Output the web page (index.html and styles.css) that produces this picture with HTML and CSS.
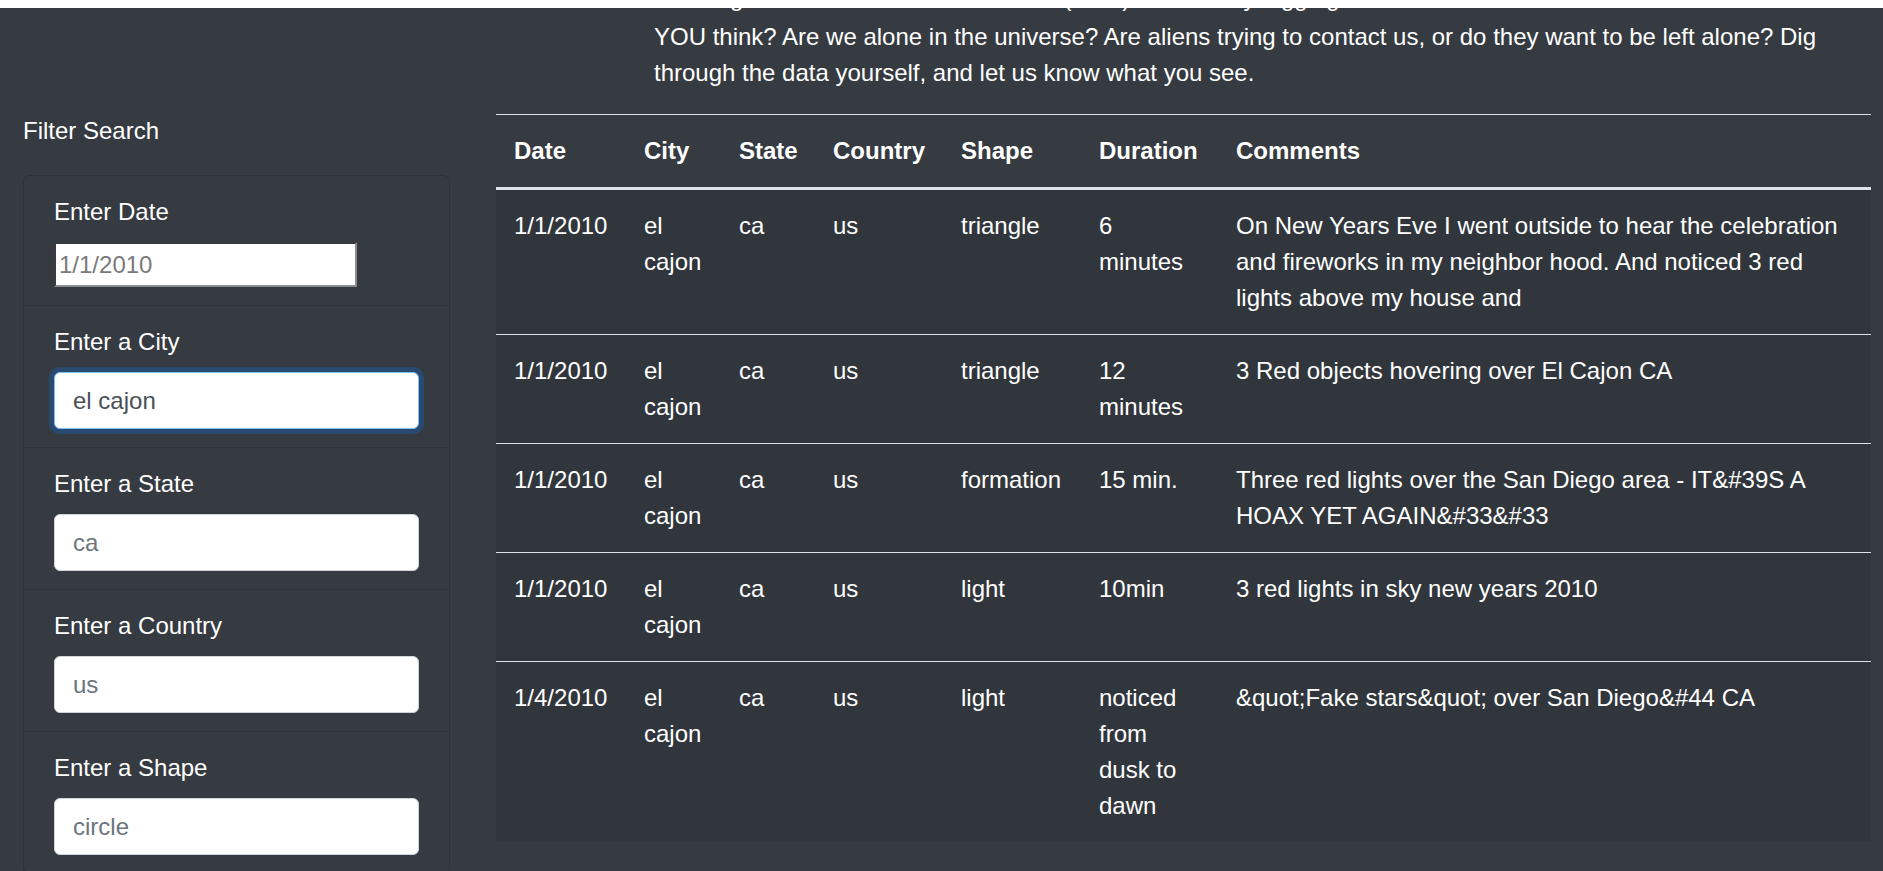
FILE: index.html
```html
<!DOCTYPE html>
<html lang="en">
<head>
<meta charset="utf-8">
<title>UFO Sightings</title>
<link rel="stylesheet" href="styles.css">
</head>
<body>
<div class="topbar"></div>
<main class="layout">
  <aside class="sidebar">
    <h2 class="filter-title">Filter Search</h2>
    <ul class="filters">
      <li class="filter-item">
        <label class="filter-label" for="datetime">Enter Date</label>
        <input class="plain-input" id="datetime" type="text" placeholder="1/1/2010">
      </li>
      <li class="filter-item">
        <label class="filter-label" for="city">Enter a City</label>
        <input class="field field-focus" id="city" type="text" value="el cajon">
      </li>
      <li class="filter-item">
        <label class="filter-label" for="state">Enter a State</label>
        <input class="field" id="state" type="text" placeholder="ca">
      </li>
      <li class="filter-item">
        <label class="filter-label" for="country">Enter a Country</label>
        <input class="field" id="country" type="text" placeholder="us">
      </li>
      <li class="filter-item">
        <label class="filter-label" for="shape">Enter a Shape</label>
        <input class="field" id="shape" type="text" placeholder="circle">
      </li>
    </ul>
  </aside>
  <section class="content">
    <p class="intro"><span class="intro-first">Reading all the stories about our alien (UFO) visitors say digging into the data. What do</span>YOU think? Are we alone in the universe? Are aliens trying to contact us, or do they want to be left alone? Dig through the data yourself, and let us know what you see.</p>
    <table class="sightings">
      <colgroup>
        <col class="c-date">
        <col class="c-city">
        <col class="c-state">
        <col class="c-country">
        <col class="c-shape">
        <col class="c-duration">
        <col class="c-comments">
      </colgroup>
      <thead>
        <tr>
          <th>Date</th>
          <th>City</th>
          <th>State</th>
          <th>Country</th>
          <th>Shape</th>
          <th>Duration</th>
          <th>Comments</th>
        </tr>
      </thead>
      <tbody>
        <tr>
          <td>1/1/2010</td>
          <td>el cajon</td>
          <td>ca</td>
          <td>us</td>
          <td>triangle</td>
          <td>6 minutes</td>
          <td>On New Years Eve I went outside to hear the celebration and fireworks in my neighbor hood. And noticed 3 red lights above my house and</td>
        </tr>
        <tr>
          <td>1/1/2010</td>
          <td>el cajon</td>
          <td>ca</td>
          <td>us</td>
          <td>triangle</td>
          <td>12 minutes</td>
          <td>3 Red objects hovering over El Cajon CA</td>
        </tr>
        <tr>
          <td>1/1/2010</td>
          <td>el cajon</td>
          <td>ca</td>
          <td>us</td>
          <td>formation</td>
          <td>15 min.</td>
          <td>Three red lights over the San Diego area - IT&amp;#39S A HOAX YET AGAIN&amp;#33&amp;#33</td>
        </tr>
        <tr>
          <td>1/1/2010</td>
          <td>el cajon</td>
          <td>ca</td>
          <td>us</td>
          <td>light</td>
          <td>10min</td>
          <td>3 red lights in sky new years 2010</td>
        </tr>
        <tr>
          <td>1/4/2010</td>
          <td>el cajon</td>
          <td>ca</td>
          <td>us</td>
          <td>light</td>
          <td>noticed from dusk to dawn</td>
          <td>&amp;quot;Fake stars&amp;quot; over San Diego&amp;#44 CA</td>
        </tr>
      </tbody>
    </table>
  </section>
</main>
</body>
</html>
```

FILE: styles.css
```css
* {
  box-sizing: border-box;
}

html, body {
  margin: 0;
  padding: 0;
}

body {
  background: #363a41;
  color: #ffffff;
  font-family: "Liberation Sans", Arial, sans-serif;
  font-size: 24px;
  line-height: 36px;
  height: 871px;
  overflow: hidden;
}

.topbar {
  height: 8px;
  background: #ffffff;
}

.layout {
  display: grid;
  grid-template-columns: 427px 1375px;
  column-gap: 46px;
  padding: 0 12px 0 23px;
  height: 863px;
  overflow: hidden;
  align-items: start;
}

/* ---------- sidebar ---------- */
.sidebar {
  padding-top: 105px;
}

.filter-title {
  margin: 0;
  font-size: 24px;
  font-weight: 400;
  line-height: 36px;
}

.filters {
  list-style: none;
  margin: 26px 0 0 0;
  padding: 0;
  border: 1px solid #2e3238;
  border-radius: 6px;
}

.filter-item {
  padding: 18px 30px;
  border-top: 1px solid #2e3238;
}

.filter-item:first-child {
  border-top: 0;
}

.filter-label {
  display: block;
  margin-bottom: 12px;
  line-height: 36px;
}

.plain-input {
  display: block;
  width: 303px;
  height: 45px;
  margin: 0;
  padding: 1px 3px;
  font-family: "Liberation Sans", Arial, sans-serif;
  font-size: 24px;
  line-height: 36px;
  color: #212529;
  background: #ffffff;
  border: 2px inset #8a8d91;
  border-radius: 0;
  outline: none;
}

.plain-input::placeholder {
  color: #7a7a7a;
}

.field {
  display: block;
  width: 100%;
  height: 57px;
  margin: 0;
  padding: 9px 18px;
  font-family: "Liberation Sans", Arial, sans-serif;
  font-size: 24px;
  line-height: 36px;
  color: #495057;
  background: #ffffff;
  border: 1px solid #ced4da;
  border-radius: 6px;
  outline: none;
}

.field::placeholder {
  color: #6c757d;
}

.field-focus {
  border-color: #80bdff;
  box-shadow: 0 0 0 5px rgba(0, 123, 255, 0.25);
}

/* ---------- content ---------- */
.content {
  min-width: 0;
}

.intro {
  margin: -25px 0 23px 0;
  padding: 0 31px 0 158px;
  line-height: 36px;
}

.intro-first {
  display: block;
  line-height: 30px;
  margin-bottom: 6px;
  white-space: nowrap;
}

.sightings {
  width: 1375px;
  table-layout: fixed;
  border-collapse: collapse;
  color: #ffffff;
}

.c-date { width: 130px; }
.c-city { width: 95px; }
.c-state { width: 94px; }
.c-country { width: 128px; }
.c-shape { width: 138px; }
.c-duration { width: 137px; }
.c-comments { width: 653px; }

.sightings th,
.sightings td {
  padding: 18px;
  text-align: left;
  border-top: 1px solid #dee2e6;
  line-height: 36px;
}

.sightings th {
  font-weight: 700;
  vertical-align: bottom;
  border-bottom: 3px solid #dee2e6;
  white-space: nowrap;
}

.sightings td {
  vertical-align: top;
}

.sightings tbody {
  background: #31363c;
}
```
